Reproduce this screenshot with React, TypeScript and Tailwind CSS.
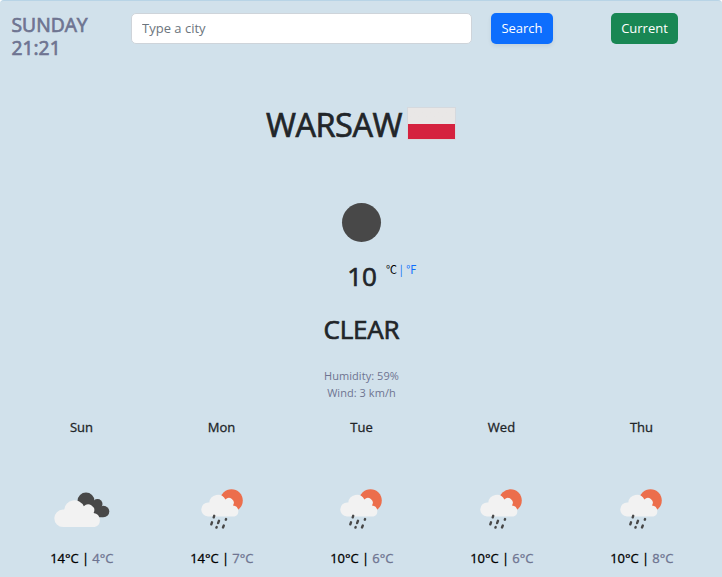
type Day = { name: string; high: number; low: number; cloudy?: boolean };

const days: Day[] = [
  { name: "Sun", high: 14, low: 4, cloudy: true },
  { name: "Mon", high: 14, low: 7 },
  { name: "Tue", high: 10, low: 6 },
  { name: "Wed", high: 10, low: 6 },
  { name: "Thu", high: 10, low: 8 },
];

function CloudIcon() {
  return (
    <svg width="56" height="36" viewBox="0 0 56 36" className="block">
      <g fill="#484848">
        <circle cx="32" cy="9" r="8.5" />
        <circle cx="43.500" cy="12" r="5" />
        <circle cx="49.500" cy="19.500" r="5.800" />
        <path d="M28 9h12l10 10-1 6.300H38z" />
      </g>
      <path
        d="M9 35a8.700 8.700 0 0 1 0-17.400h1.200A10.300 10.300 0 0 1 29.800 14.300a6 6 0 0 1 9.800 6.700 7.200 7.200 0 0 1 1.200 14z"
        fill="#f2f2f2"
      />
    </svg>
  );
}

function RainIcon() {
  return (
    <svg width="42" height="41" viewBox="0 0 42 41" className="block">
      <circle cx="30.500" cy="11.500" r="11.300" fill="#ec6e4c" />
      <path
        d="M7 27.500a7 7 0 0 1 .5-14H8.300A8.500 8.500 0 0 1 24.400 10.600a4.800 4.800 0 0 1 7.600 5.800 5.700 5.700 0 0 1 1.400 11.100z"
        fill="#f2f2f2"
      />
      <g stroke="#484848" strokeWidth="2.400" strokeLinecap="round">
        <path d="M13.200 26.800l-.5 1.500M11 33.300l-.7 2M18 31.800l-.9 2.300M15.700 38l-.3.600M25.100 30l-.3.700M22.800 36.500l-.8 2" />
      </g>
    </svg>
  );
}

export default function App() {
  return (
    <div className="h-[577px] w-[722px] overflow-hidden rounded-t-[4px] border-t border-[#b8d4e6] bg-[#d1e1eb] font-['Open_Sans','Noto_Sans',sans-serif] text-[#212529]">
      <header className="flex h-[96px] items-start pt-3 text-[13px]">
        <div className="ml-[11.500px] w-[119.500px] text-[19.300px] leading-[23px] text-[#6e7491] [-webkit-text-stroke:0.700px_#6e7491]">
          <div>SUNDAY</div>
          <div>21:21</div>
        </div>
        <input
          placeholder="Type a city"
          className="h-[31px] w-[341px] rounded-[5px] border border-[#ced4da] bg-white px-[10px] pb-px placeholder:text-[#6c757d]"
        />
        <button className="ml-[19px] h-[31px] w-[62px] rounded-[5px] bg-[#0d6efd] text-white shadow-[0_2px_4px_rgba(0,0,0,0.075)]">
          Search
        </button>
        <button className="ml-[58px] h-[31px] w-[67px] rounded-[5px] bg-[#198754] text-white">
          Current
        </button>
      </header>

      <main className="flex flex-col items-center">
        <div className="flex h-[56px] items-center gap-[5px]">
          <h2 className="text-[32.500px] leading-10 tracking-[-0.500px] [-webkit-text-stroke:0.700px_#212529]">WARSAW</h2>
          <div className="mb-[3px] h-[33px] w-[49px] border border-[#d5d9de] bg-linear-to-b from-[#e9e7e6] from-50% to-[#d5223f] to-50%" />
        </div>
        <div className="mt-[50px] ml-px size-[39px] rounded-full bg-[#484848]" />
        <div className="mt-[15px] ml-[42px] flex h-[36px] items-start">
          <span className="text-[26px] leading-[38px] [-webkit-text-stroke:0.700px_#212529]">10</span>
          <span className="mt-[5px] ml-[9px] font-['Noto_Sans_CJK_SC','Open_Sans',sans-serif] text-[11px] leading-[14px] [word-spacing:0.500px] text-[#0d6efd]">
            <span className="text-black">℃</span> | ℉
          </span>
        </div>
        <h2 className="mt-[19px] ml-px text-[26px] leading-[34px] tracking-[-0.200px] [-webkit-text-stroke:0.700px_#212529]">CLEAR</h2>
        <div className="mt-[21px] ml-px text-center text-[11px] leading-[17px] tracking-[0.050px] text-[#6e7491]">
          <p>Humidity: 59%</p>
          <p>Wind: 3 km/h</p>
        </div>
      </main>

      <section className="mt-[16px] ml-[11px] grid w-[700px] grid-cols-5">
        {days.map((day) => (
          <div key={day.name} className="flex flex-col items-center text-[13px] leading-5">
            <div className="ml-px [-webkit-text-stroke:0.300px_#212529]">{day.name}</div>
            <div className="flex h-[111px] items-start justify-center pt-[52px]">
              {day.cloudy ? (
                <div className="ml-[2px] pt-[3px]"><CloudIcon /></div>
              ) : (
                <div className={day.name === "Mon" ? "ml-[2px]" : "ml-0"}><RainIcon /></div>
              )}
            </div>
            <div className="ml-[1.500px] whitespace-pre tracking-[-0.060px] text-black [-webkit-text-stroke:0.300px_#000000]">
              {day.high}°C | <span className="text-[#6e7491] [-webkit-text-stroke:0.300px_#6e7491]">{day.low}°C</span>
            </div>
          </div>
        ))}
      </section>
    </div>
  );
}
